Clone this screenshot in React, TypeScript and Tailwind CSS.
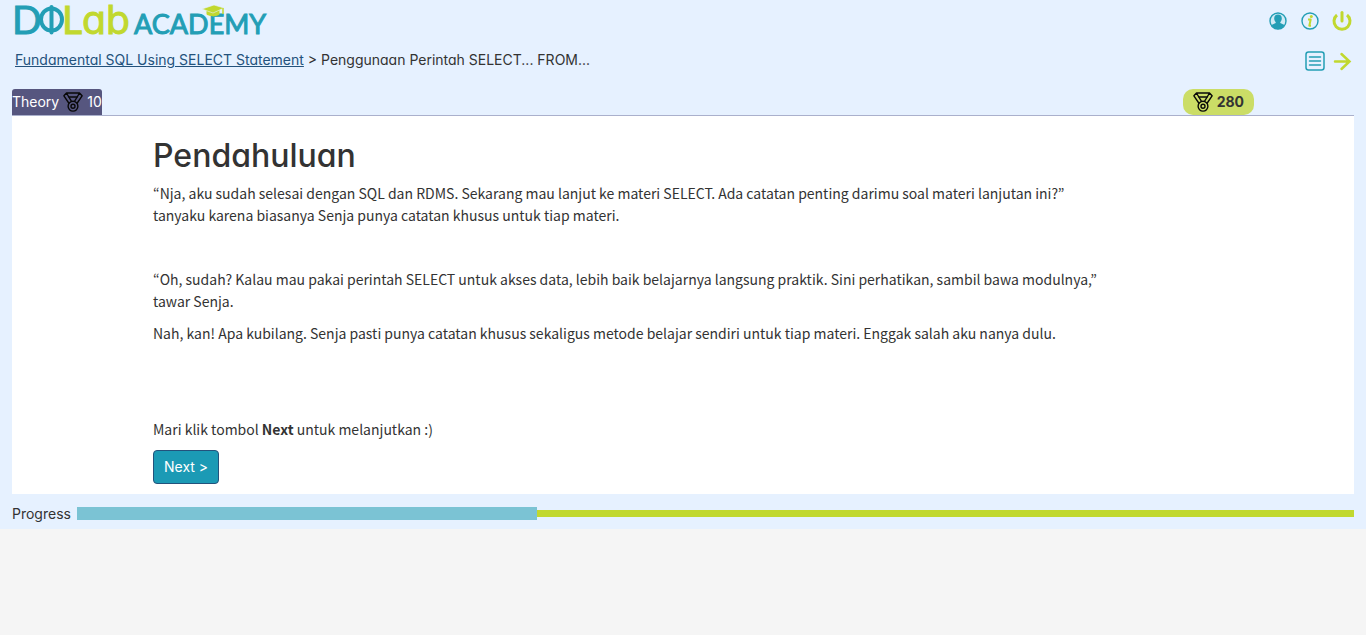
import type { ReactNode } from "react";

function Medal() {
  return (
    <svg viewBox="0 0 20 20" className="h-5 w-5 shrink-0" fill="none" stroke="#080808" strokeWidth="1.4" strokeLinejoin="round" aria-hidden="true">
      <path d="M3.500 1h13L14.200 5H5.800zM3.500 1 .9 3.800l5.200 7.700M16.500 1l2.600 2.800-5.200 7.700" />
      <path d="m5.800 5 2.600 4.200M14.200 5l-2.600 4.200" />
      <circle cx="10" cy="14.200" r="4.900" />
      <circle cx="10" cy="14.200" r="2" />
    </svg>
  );
}

function Logo() {
  return (
    <svg width="252" height="34" viewBox="0 0 252 34" className="overflow-visible" role="img" aria-label="DQLab Academy" fontFamily="Lato, sans-serif">
      <g fill="#239eb5" stroke="#239eb5">
        <text x="-3" y="29" fontSize="39" strokeWidth="1">D</text>
        <ellipse cx="36.500" cy="14.500" rx="10.500" ry="11" fill="none" strokeWidth="4" />
        <path d="M36.500 2v25.500" strokeWidth="4" strokeLinecap="round" />
        <text x="119" y="29" fontSize="27" strokeWidth="1">ACADEMY</text>
      </g>
      <g fill="#c1d82f" stroke="#c1d82f">
        <text x="47" y="29" fontSize="39" strokeWidth="1">L</text>
        <text x="67" y="29" fontSize="39" strokeWidth="1" fontFamily="Inter, sans-serif">ab</text>
        <path d="M192 5v4.500q7 3 12 0V5l-6 2z" strokeWidth="1" />
        <path d="m187 4 12-4 10 3-11 5z" stroke="#e6f1ff" strokeWidth="0.600" />
        <path d="M208 3v6" fill="none" strokeWidth="1.500" />
      </g>
    </svg>
  );
}

function IconLink({ label, children }: { label: string; children: ReactNode }) {
  return (
    <a href="#" aria-label={label} className="flex h-5 w-5 items-center justify-center">
      {children}
    </a>
  );
}

function Blank() {
  return <p className="h-[22px]" aria-hidden="true" />;
}

export default function App() {
  return (
    <div className="min-h-screen bg-[#f5f5f5] font-['Inter',sans-serif] text-sm text-[#333333] [font-feature-settings:'cv11']">
      <div className="bg-[#e6f1ff] px-3 pb-[5px]">
        <header className="flex h-[89px] justify-between pl-[3px] pr-[2px] pt-[5px]">
          <div>
            <Logo />
            <nav aria-label="Breadcrumb" className="mt-[11px] leading-5">
              <a href="#" className="text-[#23527c] underline">Fundamental SQL Using SELECT Statement</a>
              {" > "}
              <span>Penggunaan Perintah SELECT... FROM...</span>
            </nav>
          </div>
          <div className="flex flex-col items-end gap-5 pt-[6px]">
            <div className="flex gap-3">
              <IconLink label="Profile">
                <svg width="18" height="18" viewBox="0 0 18 18" aria-hidden="true">
                  <circle cx="9" cy="9" r="8" fill="#d2ebf5" stroke="#239eb5" strokeWidth="1.400" />
                  <path d="M9 2.500C6.500 2.500 5.200 4.200 5.200 6.400c0 1.600.7 2.800 1.500 3.500v1.200l-4.200 2C4 15.700 6.300 17.200 9 17.200s5-1.500 6.500-4.100l-4.200-2V9.900c.8-.7 1.500-1.900 1.500-3.500C12.800 4.200 11.500 2.500 9 2.500z" fill="#239eb5" />
                </svg>
              </IconLink>
              <IconLink label="Information">
                <svg width="18" height="18" viewBox="0 0 18 18" aria-hidden="true">
                  <circle cx="9" cy="9" r="8" fill="none" stroke="#239eb5" strokeWidth="1.400" />
                  <circle cx="10.300" cy="4.400" r="1.500" fill="#c1d82f" />
                  <path d="M7 7.500h2.700l-1.400 6.200h1.700" fill="none" stroke="#c1d82f" strokeWidth="2" strokeLinejoin="round" />
                </svg>
              </IconLink>
              <IconLink label="Log out">
                <svg width="20" height="20" viewBox="0 0 20 20" fill="none" stroke="#c1d82f" strokeWidth="3" aria-hidden="true">
                  <path d="M5 4a8 8 0 1 0 10 0" />
                  <path d="M10 1.500v8.500" strokeLinecap="round" />
                </svg>
              </IconLink>
            </div>
            <div className="flex gap-[7px]">
              <IconLink label="Contents">
                <svg width="20" height="20" viewBox="0 0 20 20" fill="none" stroke="#239eb5" aria-hidden="true">
                  <rect x="1" y="1" width="18" height="18" rx="2.500" strokeWidth="1.500" />
                  <path d="M4.500 6h11M4.500 10h11M4.500 14h11" strokeWidth="1.500" strokeLinecap="round" />
                </svg>
              </IconLink>
              <IconLink label="Next lesson">
                <svg width="20" height="20" viewBox="0 0 20 20" fill="none" stroke="#c1d82f" strokeWidth="2.500" strokeLinecap="round" aria-hidden="true">
                  <path d="M3 10.500h14.500M9.500 3l8 7.500-8 7.500" />
                </svg>
              </IconLink>
            </div>
          </div>
        </header>

        <div className="flex h-[27px] items-start justify-between border-b border-[#aab0cc] pr-[100px]">
          <div className="flex h-[26px] items-center gap-1 rounded-t-[3px] bg-[#56567f] text-white">
            Theory
            <Medal />
            10
          </div>
          <div className="flex h-[26px] items-center gap-1 rounded-[10px] bg-[#cbdd66] px-[10px] font-bold">
            <Medal />
            280
          </div>
        </div>

        <main className="bg-white pb-[10px] pl-[141px] pr-[244px] pt-[22px]">
          <h1 className="mb-[9px] text-[32px] font-medium leading-[35px]">Pendahuluan</h1>
          <div className="space-y-[10px] font-['Noto_Sans_CJK_KR',sans-serif] text-sm leading-[22px]">
            <p>“Nja, aku sudah selesai dengan SQL dan RDMS. Sekarang mau lanjut ke materi SELECT. Ada catatan penting darimu soal materi lanjutan ini?” tanyaku karena biasanya Senja punya catatan khusus untuk tiap materi.</p>
            <Blank />
            <p>“Oh, sudah? Kalau mau pakai perintah SELECT untuk akses data, lebih baik belajarnya langsung praktik. Sini perhatikan, sambil bawa modulnya,” tawar Senja.</p>
            <p>Nah, kan! Apa kubilang. Senja pasti punya catatan khusus sekaligus metode belajar sendiri untuk tiap materi. Enggak salah aku nanya dulu.</p>
            <Blank />
            <Blank />
            <p>Mari klik tombol <strong>Next</strong> untuk melanjutkan :)</p>
          </div>
          <button type="button" className="mt-[10px] block h-[34px] rounded border border-[#23527c] bg-[#1b9ab5] px-[10px] text-white">Next &gt;</button>
        </main>

        <div className="flex h-[30px] items-center gap-[6px] pt-[9px]">
          <span id="progress-label">Progress</span>
          <div className="flex flex-1 items-center" role="progressbar" aria-labelledby="progress-label" aria-valuenow={36} aria-valuemin={0} aria-valuemax={100}>
            <div className="h-[13px] w-[36%] bg-[#7bc3d4]" />
            <div className="h-[7px] flex-1 bg-[#c1d82f]" />
          </div>
        </div>
      </div>
    </div>
  );
}
